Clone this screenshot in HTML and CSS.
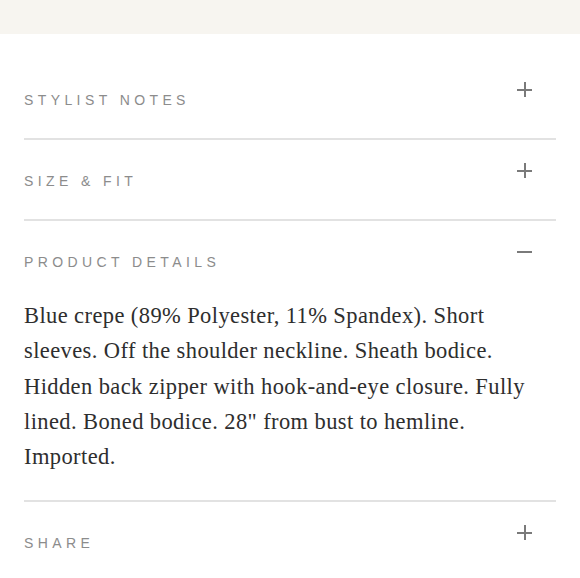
FILE: index.html
```html
<!DOCTYPE html>
<html>
<head>
<meta charset="utf-8">
<link rel="stylesheet" href="styles.css">
</head>
<body>
<div class="topband"></div>
<div class="accordion">
  <div class="item">
    <div class="head">
      <span class="title">STYLIST NOTES</span>
      <span class="icon plus"></span>
    </div>
  </div>
  <div class="item">
    <div class="head">
      <span class="title">SIZE &amp; FIT</span>
      <span class="icon plus"></span>
    </div>
  </div>
  <div class="item open">
    <div class="head">
      <span class="title">PRODUCT DETAILS</span>
      <span class="icon minus"></span>
    </div>
    <p class="body">Blue crepe (89% Polyester, 11% Spandex). Short sleeves. Off the shoulder neckline. Sheath bodice. Hidden back zipper with hook-and-eye closure. Fully lined. Boned bodice. 28" from bust to hemline. Imported.</p>
  </div>
  <div class="item last">
    <div class="head">
      <span class="title">SHARE</span>
      <span class="icon plus"></span>
    </div>
  </div>
</div>
</body>
</html>
```
FILE: styles.css
```css
html, body {
  margin: 0;
  padding: 0;
  background: #fff;
}
.topband {
  height: 34px;
  background: #f7f5f0;
}
.accordion {
  padding: 0 24px;
  margin-top: 25px;
}
.item {
  border-bottom: 2px solid #e2e2e2;
}
.item.last {
  border-bottom: none;
}
.head {
  display: flex;
  justify-content: space-between;
  align-items: flex-start;
  padding: 33px 24px 30px 0;
  height: 16px;
}
.title {
  font-family: "Liberation Sans", Arial, sans-serif;
  font-size: 14px;
  line-height: 16px;
  letter-spacing: 4.4px;
  color: #8c8c8c;
}
.icon {
  position: relative;
  width: 15px;
  height: 15px;
  margin-top: -10px;
}
.icon::before,
.icon::after {
  content: "";
  position: absolute;
  background: #7a7a7a;
}
.icon::before {
  left: 0;
  right: 0;
  top: 7px;
  height: 1.5px;
}
.plus::after {
  top: 0;
  bottom: 0;
  left: 7px;
  width: 1.5px;
}
.body {
  margin: -2px 0 0;
  padding: 0 10px 26px 0;
  font-family: "Liberation Serif", "Times New Roman", serif;
  font-size: 22.5px;
  line-height: 35.25px;
  letter-spacing: 0.4px;
  color: #2e2e2e;
}
```
